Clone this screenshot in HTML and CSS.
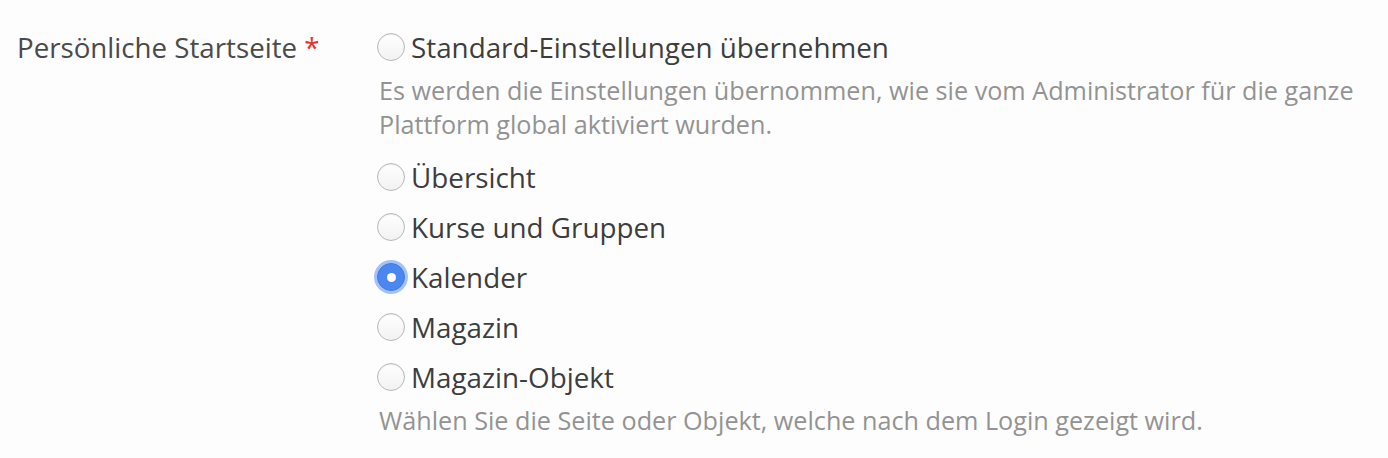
FILE: index.html
```html
<!DOCTYPE html>
<html lang="de">
<head>
<meta charset="utf-8">
<link rel="stylesheet" href="styles.css">
</head>
<body>
<div class="field">
  <div class="label">Persönliche Startseite <span class="req">*</span></div>
  <div class="control">
    <label class="opt"><input type="radio" name="start"><span>Standard-Einstellungen übernehmen</span></label>
    <div class="desc first">Es werden die Einstellungen übernommen, wie sie vom Administrator für die ganze Plattform global aktiviert wurden.</div>
    <label class="opt"><input type="radio" name="start"><span>Übersicht</span></label>
    <label class="opt"><input type="radio" name="start"><span>Kurse und Gruppen</span></label>
    <label class="opt"><input type="radio" name="start" checked><span>Kalender</span></label>
    <label class="opt"><input type="radio" name="start"><span>Magazin</span></label>
    <label class="opt"><input type="radio" name="start"><span>Magazin-Objekt</span></label>
    <div class="desc">Wählen Sie die Seite oder Objekt, welche nach dem Login gezeigt wird.</div>
  </div>
</div>
</body>
</html>
```
FILE: styles.css
```css
html, body {
  margin: 0;
  padding: 0;
  background: #fdfdfd;
}
body {
  font-family: "Open Sans", "Liberation Sans", sans-serif;
  color: #444;
}
.field {
  display: flex;
  padding: 22px 0 0 17px;
}
.label {
  width: 360px;
  font-size: 27.7px;
  line-height: 50px;
  color: #4a4a4a;
}
.req {
  color: #e8302a;
}
.control {
  display: flex;
  flex-direction: column;
  width: 1000px;
}
.opt {
  display: flex;
  align-items: center;
  height: 50px;
  font-size: 27.8px;
  color: #3d3d3d;
}
.opt input {
  appearance: none;
  -webkit-appearance: none;
  margin: 0 6px 0 0;
  width: 28px;
  height: 28px;
  border-radius: 50%;
  border: 1px solid #b8b8b8;
  background: linear-gradient(#ffffff, #f2f2f2);
  box-shadow: inset 0 1px 1px rgba(0,0,0,0.08);
  flex: none;
  position: relative;
}
.opt input:checked {
  background: #4c87f0;
  border-color: #3f7ae6;
  box-shadow: 0 0 0 3px rgba(92,145,240,0.55);
}
.opt input:checked::after {
  content: "";
  position: absolute;
  left: 50%;
  top: 50%;
  width: 9px;
  height: 9px;
  margin: -4.5px 0 0 -4.5px;
  border-radius: 50%;
  background: #fff;
}
.desc {
  font-size: 25.2px;
  line-height: 34px;
  color: #939393;
  margin: 1px 0 0 2px;
}
.desc.first {
  margin: 1px 0 11px 2px;
}
```
